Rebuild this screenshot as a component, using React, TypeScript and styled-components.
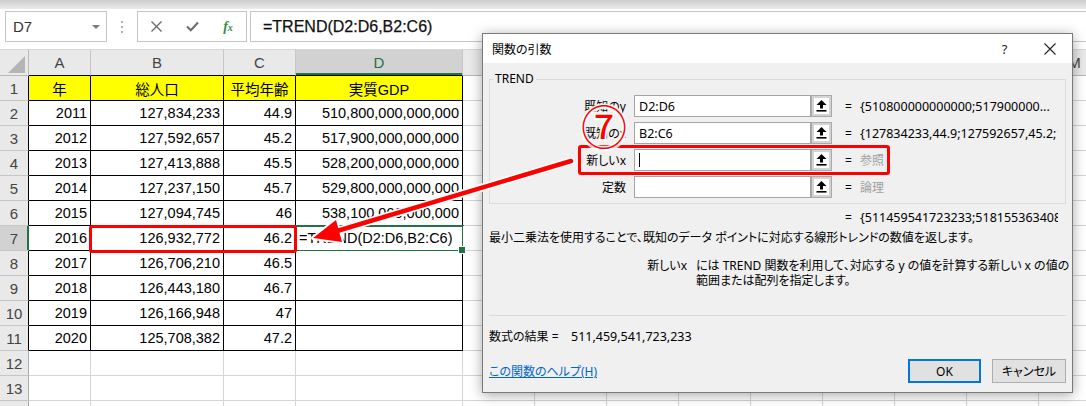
import React from "react";
import styled, { createGlobalStyle } from "styled-components";

const GlobalStyle = createGlobalStyle`
  html, body { margin: 0; padding: 0; background: #fff; }
  body {
    width: 1086px; height: 406px; overflow: hidden;
    font-family: "Liberation Sans", "Noto Sans CJK JP", sans-serif;
  }
  * { box-sizing: border-box; }
`;

const Screen = styled.div`
  position: relative;
  width: 1086px;
  height: 406px;
  overflow: hidden;
  background: #fff;
`;

const RibbonEdge = styled.div`
  height: 9px;
  background: linear-gradient(#cdcdcd, #ebebeb);
`;

const FormulaBar = styled.div`
  display: flex;
  align-items: flex-start;
  height: 41px;
  padding-top: 2px;
  background: #fff;
  border-bottom: 1px solid #d6d6d6;
`;

const NameBox = styled.div`
  margin-left: 5px;
  width: 102px;
  height: 31px;
  border: 1px solid #c6c6c6;
  display: flex;
  align-items: center;
  justify-content: space-between;
  padding: 0 6px 0 7px;
  font-size: 15px;
  color: #333;
`;

const DropTri = styled.span`
  width: 0;
  height: 0;
  border-left: 4px solid transparent;
  border-right: 4px solid transparent;
  border-top: 4px solid #7a7a7a;
`;

const Grip = styled.div`
  width: 30px;
  height: 31px;
  display: flex;
  flex-direction: column;
  align-items: center;
  justify-content: center;
  gap: 3px;
`;

const GripDot = styled.span`
  width: 2px;
  height: 2px;
  background: #b0b0b0;
`;

const FnButtons = styled.div`
  width: 110px;
  height: 31px;
  border: 1px solid #c6c6c6;
  display: grid;
  grid-template-columns: repeat(3, 36px);
  align-items: center;
  justify-items: center;
`;

const FxGlyph = styled.span`
  font-family: "Liberation Serif", serif;
  font-style: italic;
  font-weight: bold;
  color: #3a8a4a;
  font-size: 14px;
  & > small { font-size: 10px; }
`;

const FormulaInput = styled.div`
  margin-left: 3px;
  flex: 1;
  height: 31px;
  border: 1px solid #c6c6c6;
  border-right: none;
  display: flex;
  align-items: center;
  padding-left: 12px;
  font-size: 16px;
  color: #111;
  -webkit-text-stroke: 0.25px #111;
`;

const Sheet = styled.div`
  display: grid;
  grid-template-columns: 29px 62px 133px 72px 167px repeat(9, 72px);
  grid-template-rows: 26px repeat(14, 25px);
  font-size: 14.5px;
`;

const Corner = styled.div`
  position: relative;
  background: #e9e9e9;
  border-right: 1px solid #b8b8b8;
  border-bottom: 1px solid #b8b8b8;
  display: flex;
  align-items: flex-end;
  justify-content: flex-end;
  padding: 0 3px 2px 0;
`;

const ColHeader = styled.div<{ $sel?: boolean; $dark?: boolean }>`
  background: ${(p) => (p.$sel ? "#d2d2d2" : "#e9e9e9")};
  color: ${(p) => (p.$sel ? "#217346" : "#444")};
  border-right: 1px solid #c6c6c6;
  border-bottom: 1px solid ${(p) => (p.$dark ? "#000" : "#b8b8b8")};
  box-shadow: ${(p) => (p.$sel ? "inset 0 -2px 0 #217346" : "none")};
  display: flex;
  align-items: center;
  justify-content: center;
  font-size: 15px;
`;

const RowHeader = styled.div<{ $sel?: boolean; $edge: string }>`
  background: ${(p) => (p.$sel ? "#d2d2d2" : "#e9e9e9")};
  color: #444;
  border-right: 1px solid ${(p) => p.$edge};
  border-bottom: 1px solid #c6c6c6;
  box-shadow: ${(p) => (p.$sel ? "inset -1px 0 0 #217346" : "none")};
  display: flex;
  align-items: center;
  justify-content: center;
  font-size: 15px;
`;

const Cell = styled.div<{ $line: string; $bg?: string; $align: string; $selected?: boolean }>`
  position: relative;
  background: ${(p) => p.$bg || "#fff"};
  border-right: 1px solid ${(p) => p.$line};
  border-bottom: 1px solid ${(p) => p.$line};
  display: flex;
  align-items: center;
  justify-content: ${(p) => p.$align};
  padding: 0 3px;
  white-space: nowrap;
  color: #000;
  ${(p) =>
    p.$selected &&
    `
    &::after {
      content: "";
      position: absolute;
      left: -2px; top: -1px; right: -2px; bottom: -2px;
      border: 2px solid #217346;
    }
    &::before {
      content: "";
      position: absolute;
      right: -4px; bottom: -4px;
      width: 6px; height: 6px;
      background: #217346;
      border: 1px solid #fff;
      z-index: 2;
    }
  `}
`;

/* ---------- dialog ---------- */

const Dialog = styled.div`
  position: absolute;
  left: 482px;
  top: 33px;
  width: 591px;
  height: 360px;
  border: 1px solid #7a7a7a;
  background: #f0f0f0;
  box-shadow: 0 2px 12px rgba(0, 0, 0, 0.35);
  display: flex;
  flex-direction: column;
  font-family: "Noto Sans", "Noto Sans CJK JP", sans-serif;
  font-feature-settings: "palt";
  font-size: 12px;
  color: #000;
`;

const TitleBar = styled.div`
  height: 29px;
  background: #fff;
  display: flex;
  align-items: center;
  padding-left: 9px;
`;

const TitleText = styled.span`
  flex: 1;
`;

const TitleButton = styled.span`
  width: 45px;
  height: 29px;
  display: flex;
  align-items: center;
  justify-content: center;
  font-size: 13px;
  color: #222;
`;

const DialogBody = styled.div`
  flex: 1;
  padding: 9px 6px 0 6px;
  display: flex;
  flex-direction: column;
`;

const Group = styled.fieldset`
  margin: 0;
  padding: 9px 0 5px 0;
  border: 1px solid #dcdcdc;
  min-width: 0;
`;

const GroupLegend = styled.legend`
  margin-left: 3px;
  padding: 0 2px;
  line-height: 14px;
  font-size: 12px;
`;

const ArgGrid = styled.div`
  display: grid;
  grid-template-columns: 144px 177px 21px 28px 198px;
  grid-auto-rows: 22px;
  row-gap: 5px;
  align-items: center;
`;

const ArgLabel = styled.span`
  text-align: right;
  padding-right: 8px;
  white-space: nowrap;
`;

const ArgInput = styled.div`
  height: 22px;
  border: 1px solid #a4a4a4;
  background: #fff;
  display: flex;
  align-items: center;
  padding-left: 4px;
  font-size: 12.5px;
`;

const Caret = styled.span`
  width: 1px;
  height: 14px;
  background: #000;
`;

const RefButton = styled.div`
  height: 22px;
  border: 1px solid #a9a9a9;
  box-shadow: inset 0 0 0 2px #d4d4d4;
  background: #fff;
  display: flex;
  align-items: center;
  justify-content: center;
`;

const Eq = styled.span`
  padding-left: 13px;
`;

const ArgValue = styled.span<{ $muted?: boolean }>`
  overflow: hidden;
  white-space: nowrap;
  font-size: ${(p) => (p.$muted ? "12px" : "12.5px")};
  color: ${(p) => (p.$muted ? "#a0a0a0" : "#000")};
`;

const ResultGrid = styled(ArgGrid)`
  margin-top: 2px;
  margin-left: 1px;
`;

const Description = styled.div`
  margin-top: 2px;
  line-height: 16px;
  white-space: nowrap;
`;

const HelpBlock = styled.div`
  margin-top: 12px;
  display: grid;
  grid-template-columns: 198px 1fr;
  column-gap: 9px;
  line-height: 15px;
  white-space: nowrap;
`;

const HelpLabel = styled.span`
  text-align: right;
`;

const Divider = styled.div`
  margin-top: 27px;
  height: 1px;
  background: #dadada;
`;

const ResultLine = styled.div`
  margin-top: 13px;
  line-height: 16px;
  display: flex;
`;

const ResultLabel = styled.span`
  width: 82px;
`;

const ResultNumber = styled.span`
  font-size: 12.5px;
`;

const Footer = styled.div`
  margin-top: 14px;
  display: flex;
  align-items: center;
  justify-content: space-between;
`;

const HelpLink = styled.a`
  color: #0066cc;
  text-decoration: underline;
`;

const ButtonRow = styled.div`
  display: flex;
  gap: 11px;
`;

const DlgButton = styled.button<{ $primary?: boolean; $w: number }>`
  width: ${(p) => p.$w}px;
  height: 24px;
  background: #e1e1e1;
  border: ${(p) => (p.$primary ? "2px solid #0078d7" : "1px solid #adadad")};
  font-family: inherit;
  font-feature-settings: "palt";
  font-size: 12px;
  color: #000;
  padding: 0;
`;

/* ---------- annotations ---------- */

const RedBox = styled.div`
  position: absolute;
  border: 3.5px solid #ff0000;
  border-radius: 3px;
  pointer-events: none;
`;

const Overlay = styled.svg`
  position: absolute;
  left: 0;
  top: 0;
  pointer-events: none;
`;

const CircleNum = styled.span`
  position: absolute;
  left: 581px;
  top: 101px;
  width: 46px;
  text-align: center;
  font-family: "Noto Sans CJK JP", sans-serif;
  font-size: 46px;
  line-height: 46px;
  color: #ff0000;
  text-shadow: 0 0 2px #fff, 0 0 3px #fff, 1.5px 1.5px 1px #fff, -1.5px -1.5px 1px #fff, 1.5px -1.5px 1px #fff,
    -1.5px 1.5px 1px #fff;
`;

/* ---------- data ---------- */

const COLS = ["A", "B", "C", "D", "E", "F", "G", "H", "I", "J", "K", "L", "M"];

const DATA: string[][] = [
  ["年", "総人口", "平均年齢", "実質GDP"],
  ["2011", "127,834,233", "44.9", "510,800,000,000,000"],
  ["2012", "127,592,657", "45.2", "517,900,000,000,000"],
  ["2013", "127,413,888", "45.5", "528,200,000,000,000"],
  ["2014", "127,237,150", "45.7", "529,800,000,000,000"],
  ["2015", "127,094,745", "46", "538,100,000,000,000"],
  ["2016", "126,932,772", "46.2", "=TREND(D2:D6,B2:C6)"],
  ["2017", "126,706,210", "46.5", ""],
  ["2018", "126,443,180", "46.7", ""],
  ["2019", "126,166,948", "47", ""],
  ["2020", "125,708,382", "47.2", ""],
];

const ARGS = [
  { label: "既知のy", value: "D2:D6", result: "{510800000000000;517900000...", muted: false },
  { label: "既知のx", value: "B2:C6", result: "{127834233,44.9;127592657,45.2;127413888", muted: false },
  { label: "新しいx", value: "", result: "参照", muted: true, caret: true },
  { label: "定数", value: "", result: "論理", muted: true },
];

const RefIcon = () => (
  <svg width="11" height="12" viewBox="0 0 11 12">
    <path d="M5.5 0 L10.5 5 L7 5 L7 8.5 L4 8.5 L4 5 L0.5 5 Z" fill="#000" />
    <rect x="0.5" y="10" width="10" height="1.6" fill="#000" />
  </svg>
);

const Spreadsheet = () => {
  const cells: React.ReactNode[] = [];
  cells.push(
    <Corner key="corner">
      <svg width="17" height="17" viewBox="0 0 17 17">
        <path d="M17 0 L17 17 L0 17 Z" fill="#b5b5b5" />
      </svg>
    </Corner>
  );
  COLS.forEach((c, i) => {
    cells.push(
      <ColHeader key={`h${c}`} $sel={c === "D"} $dark={i < 4}>
        {c}
      </ColHeader>
    );
  });
  for (let r = 1; r <= 14; r++) {
    const inTable = r <= 11;
    cells.push(
      <RowHeader key={`r${r}`} $sel={r === 7} $edge={r === 7 ? "#217346" : inTable ? "#000" : "#ababab"}>
        {r}
      </RowHeader>
    );
    COLS.forEach((c, ci) => {
      const tableCell = inTable && ci < 4;
      const text = tableCell ? DATA[r - 1][ci] : "";
      const isHeader = r === 1 && ci < 4;
      const isFormula = r === 7 && ci === 3;
      cells.push(
        <Cell
          key={`${c}${r}`}
          $line={tableCell ? "#000" : "#d4d4d4"}
          $bg={isHeader ? "#ffff00" : undefined}
          $align={isHeader ? "center" : isFormula ? "flex-start" : "flex-end"}
          $selected={isFormula}
        >
          {text}
        </Cell>
      );
    });
  }
  return <Sheet>{cells}</Sheet>;
};

const FunctionDialog = () => (
  <Dialog>
    <TitleBar>
      <TitleText>関数の引数</TitleText>
      <TitleButton>?</TitleButton>
      <TitleButton>
        <svg width="12" height="12" viewBox="0 0 12 12">
          <path d="M0.5 0.5 L11.5 11.5 M11.5 0.5 L0.5 11.5" stroke="#222" strokeWidth="1.1" />
        </svg>
      </TitleButton>
    </TitleBar>
    <DialogBody>
      <Group>
        <GroupLegend>TREND</GroupLegend>
        <ArgGrid>
          {ARGS.map((a) => (
            <React.Fragment key={a.label}>
              <ArgLabel>{a.label}</ArgLabel>
              <ArgInput>{a.caret ? <Caret /> : a.value}</ArgInput>
              <RefButton>
                <RefIcon />
              </RefButton>
              <Eq>=</Eq>
              <ArgValue $muted={a.muted}>{a.result}</ArgValue>
            </React.Fragment>
          ))}
        </ArgGrid>
      </Group>
      <ResultGrid>
        <span />
        <span />
        <span />
        <Eq>=</Eq>
        <ArgValue>{"{511459541723233;518155363408;524851185093"}</ArgValue>
      </ResultGrid>
      <Description>
        最小二乗法を使用することで、既知のデータ ポイントに対応する線形トレンドの数値を返します。
      </Description>
      <HelpBlock>
        <HelpLabel>新しいx</HelpLabel>
        <span>
          には TREND 関数を利用して、対応する y の値を計算する新しい x の値の
          <br />
          範囲または配列を指定します。
        </span>
      </HelpBlock>
      <Divider />
      <ResultLine>
        <ResultLabel>数式の結果 =</ResultLabel>
        <ResultNumber>511,459,541,723,233</ResultNumber>
      </ResultLine>
      <Footer>
        <HelpLink>この関数のヘルプ(H)</HelpLink>
        <ButtonRow>
          <DlgButton $primary $w={73}>OK</DlgButton>
          <DlgButton $w={74}>キャンセル</DlgButton>
        </ButtonRow>
      </Footer>
    </DialogBody>
  </Dialog>
);

const Annotations = () => {
  const tip = { x: 313, y: 238 };
  const neck = { x: 337, y: 231 };
  const start = { x: 571, y: 161 };
  const head = `${tip.x},${tip.y} 336,220 342,242`;
  return (
    <>
      <RedBox style={{ left: 89, top: 225, width: 208, height: 28 }} />
      <RedBox style={{ left: 578, top: 145, width: 312, height: 30 }} />
      <Overlay width={1086} height={406} viewBox="0 0 1086 406">
        <line x1={start.x} y1={start.y} x2={neck.x} y2={neck.y} stroke="#fff" strokeWidth="8" strokeLinecap="round" />
        <polygon points={head} fill="#fff" stroke="#fff" strokeWidth="4" strokeLinejoin="round" />
        <line x1={start.x} y1={start.y} x2={neck.x} y2={neck.y} stroke="#ff0000" strokeWidth="4.5" strokeLinecap="round" />
        <polygon points={head} fill="#ff0000" />
      </Overlay>
      <CircleNum>⑦</CircleNum>
    </>
  );
};

export default function App() {
  return (
    <Screen>
      <GlobalStyle />
      <RibbonEdge />
      <FormulaBar>
        <NameBox>
          <span>D7</span>
          <DropTri />
        </NameBox>
        <Grip>
          <GripDot />
          <GripDot />
          <GripDot />
        </Grip>
        <FnButtons>
          <svg width="11" height="11" viewBox="0 0 11 11">
            <path d="M0.5 0.5 L10.5 10.5 M10.5 0.5 L0.5 10.5" stroke="#6b6b6b" strokeWidth="1.4" />
          </svg>
          <svg width="13" height="11" viewBox="0 0 13 11">
            <path d="M1 5.5 L4.8 9.3 L12 1.5" stroke="#6b6b6b" strokeWidth="2" fill="none" />
          </svg>
          <FxGlyph>
            f<small>x</small>
          </FxGlyph>
        </FnButtons>
        <FormulaInput>=TREND(D2:D6,B2:C6)</FormulaInput>
      </FormulaBar>
      <Spreadsheet />
      <FunctionDialog />
      <Annotations />
    </Screen>
  );
}
